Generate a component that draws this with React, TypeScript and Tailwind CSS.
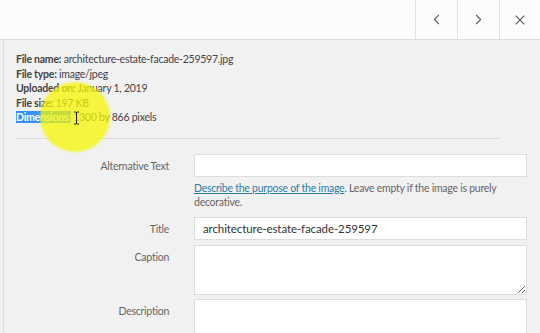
import { ChevronLeft, ChevronRight, X } from "lucide-react";

const details = [
  ["File name:", "architecture-estate-facade-259597.jpg"],
  ["File type:", "image/jpeg"],
  ["Uploaded on:", "January 1, 2019"],
  ["File size:", "197 KB"],
];

export default function App() {
  return (
    <div className="relative w-[540px] h-[333px] overflow-hidden bg-[#f1f1f1] font-['Lato',sans-serif] text-[#444]">
      {/* Header */}
      <div className="flex h-[40px] justify-end border-b border-[#dddddd] bg-[#fcfcfc]">
        <button className="flex w-[42px] items-center justify-center border-l border-[#e2e2e2] text-[#666]">
          <ChevronLeft size={17} strokeWidth={1.6} />
        </button>
        <button className="flex w-[42px] items-center justify-center border-l border-[#e2e2e2] text-[#666]">
          <ChevronRight size={17} strokeWidth={1.6} />
        </button>
        <button className="flex w-[41px] items-center justify-center border-l border-[#e2e2e2] text-[#666]">
          <X size={16} strokeWidth={1.6} />
        </button>
      </div>

      {/* Body */}
      <div className="ml-[3px] h-full border-l border-[#dcdcdc] pl-[12px] pr-[13px] text-[10.5px] tracking-[-0.25px]">
        <div className="pt-[12px] leading-[14.5px]">
          {details.map(([k, v]) => (
            <div key={k}>
              <span className="font-bold">{k}</span> {v}
            </div>
          ))}
          <div>
            <span className="bg-[#3390ff] font-bold text-white">Dimensions:</span> 1300 by 866 pixels
          </div>
        </div>

        <div className="mt-[13px] w-[484px] border-t border-[#dddddd]" />

        <div className="mt-[15px] grid grid-cols-[153px_1fr] gap-x-[25px] leading-[15px]">
          <div className="pt-[5px] text-right text-[#666]">Alternative Text</div>
          <div>
            <input className="block h-[23px] w-full border border-[#dddddd] bg-white px-2 text-[11.5px] text-[#333] outline-none" />
            <p className="mt-[4px] leading-[14.5px] text-[#666]">
              <a className="text-[#2a7ea6] underline">Describe the purpose of the image</a>. Leave empty if the image is purely decorative.
            </p>
          </div>

          <div className="mt-[7px] pt-[5px] text-right text-[#666]">Title</div>
          <div className="mt-[7px]">
            <input
              defaultValue="architecture-estate-facade-259597"
              className="block h-[23px] w-full border border-[#dddddd] bg-white px-2 text-[11.5px] tracking-[-0.1px] text-[#333] outline-none"
            />
          </div>

          <div className="mt-[5px] pt-[5px] text-right text-[#666]">Caption</div>
          <div className="mt-[5px]">
            <textarea className="block h-[50px] w-full border border-[#dddddd] bg-white outline-none" />
          </div>

          <div className="mt-[4px] pt-[5px] text-right text-[#666]">Description</div>
          <div className="mt-[4px]">
            <textarea className="block h-[60px] w-full border border-[#dddddd] bg-white outline-none" />
          </div>
        </div>
      </div>

      {/* Highlight cursor overlay */}
      <div className="pointer-events-none absolute left-[40px] top-[82px] h-[70px] w-[70px] rounded-full bg-[#f5f500]/75 blur-[1px]" />
      <svg className="pointer-events-none absolute left-[73px] top-[111px]" width="7" height="14" viewBox="0 0 7 14">
        <path d="M1 1h2M4 1h2M3.5 1v12M1 13h2M4 13h2" stroke="#222" strokeWidth="1" fill="none" />
      </svg>
    </div>
  );
}
